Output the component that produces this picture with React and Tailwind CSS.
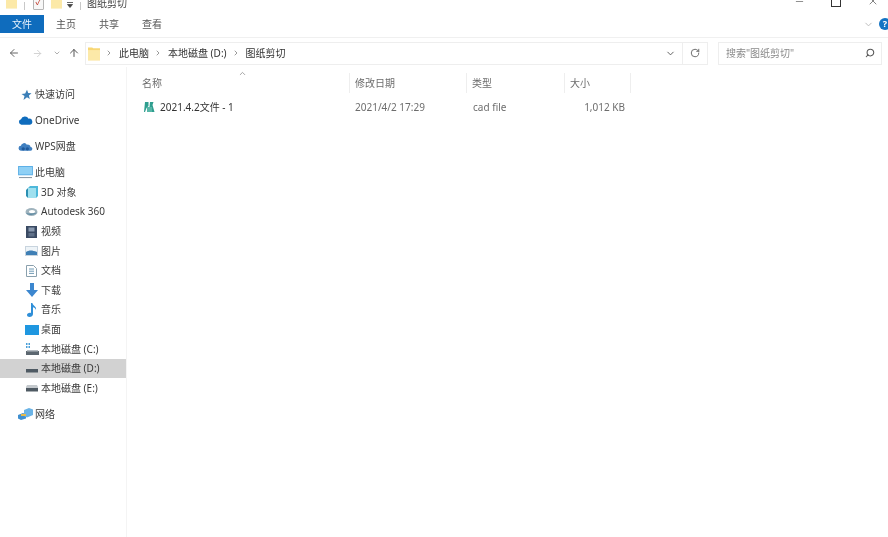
import { ArrowLeft, ArrowRight, ArrowUp, ChevronDown, ChevronRight, ChevronUp, RotateCw, Search, Minus, X } from "lucide-react";

const FONT = "font-['Noto_Sans','Noto_Sans_CJK_SC',sans-serif]";

function FolderIcon({ className }) {
  return (
    <svg className={className} viewBox="0 0 14 16">
      <path d="M0 1h5l1 1h8v14H0z" fill="#f8d775" />
      <path d="M0 4h14v12H0z" fill="#fce9a8" />
    </svg>
  );
}

const Star = () => (
  <svg className="h-3 w-3" viewBox="0 0 12 12">
    <path d="M7 .8l1.2 3.3 3.3.2-2.6 2.2.9 3.500L7 8.200 3.500 11l1-3.900L1.500 5l3.700-.6z" fill="#3b7fb8" />
  </svg>
);
const Cloud = () => (
  <svg className="h-[11px] w-[15px]" viewBox="0 0 16 12">
    <path d="M3.500 10.500a3 3 0 0 1-.4-5.900A4.500 4.500 0 0 1 11.400 4a3.300 3.300 0 0 1 1.400 6.500z" fill="#0f6cbd" />
  </svg>
);
const WpsCloud = () => (
  <svg className="h-[11px] w-[15px]" viewBox="0 0 16 12">
    <path d="M3 10.500A2.600 2.600 0 0 1 3 5.300 3.500 3.500 0 0 1 9.500 4 3 3 0 0 1 13.500 6.500a2 2 0 0 1 0 4z" fill="#3f7fc0" />
    <circle cx="5.500" cy="8.500" r="1.800" fill="#1f5a9c" />
    <circle cx="10" cy="8.500" r="1.800" fill="#1f5a9c" />
  </svg>
);
const Monitor = () => (
  <svg className="h-[13px] w-[15px]" viewBox="0 0 16 14">
    <path d="M0 0h16v10H0z" fill="#5aaee6" />
    <path d="M1 1h14v8H1z" fill="#8fd0f5" />
    <path d="M1 12h14v1H1z" fill="#7b8b99" />
  </svg>
);
const Cube = () => (
  <svg className="h-3 w-3" viewBox="0 0 12 12">
    <path d="M4 0h8v10l-2 2H2V2z" fill="#4db8da" />
    <path d="M2 2h8v10H2z" fill="#9fe0ef" />
    <path d="M0 4l2-2v10l-2-2z" fill="#2b8fb2" />
  </svg>
);
const Autodesk = () => (
  <svg className="h-3 w-[13px]" viewBox="0 0 13 12">
    <ellipse cx="6.500" cy="6" rx="6" ry="4" fill="#9fb3bd" />
    <ellipse cx="7" cy="5.500" rx="3" ry="1.600" fill="#fff" />
    <path d="M1 7c2 2.500 7 3 11-.5-3 1-7 1.500-11 .5z" fill="#5d8aa3" />
  </svg>
);
const Video = () => (
  <svg className="h-3 w-[11px]" viewBox="0 0 11 12">
    <path d="M0 0h11v12H0z" fill="#3a4a63" />
    <path d="M2.500 1.500h6v4h-6z" fill="#8a9ab0" />
    <path d="M2.500 7h6v3.500h-6z" fill="#5f7088" />
  </svg>
);
const Picture = () => (
  <svg className="h-2.5 w-[13px]" viewBox="0 0 13 10">
    <path d="M0 0h13v10H0z" fill="#c8d4de" />
    <path d="M1 1h11v8H1z" fill="#eef4f8" />
    <path d="M1 6c3-2 6-2 11 0v3H1z" fill="#3f7fb5" />
  </svg>
);
const Doc = () => (
  <svg className="h-3 w-[11px]" viewBox="0 0 11 12">
    <path d="M.5.5h7l3 3v8H.5z" fill="#fff" stroke="#8aa0ad" />
    <path d="M3 4h5M3 6.200h5M3 8.400h5" stroke="#6f9ab5" />
  </svg>
);
const Download = () => (
  <svg className="h-3.5 w-3" viewBox="0 0 12 14">
    <path d="M4 0h4v7h4l-6 7-6-7h4z" fill="#3c87cf" />
  </svg>
);
const Music = () => (
  <svg className="h-3.5 w-2.5" viewBox="0 0 10 14">
    <path d="M4 0h1.400c.4 2.600 4.600 3.600 3.600 7-.6-2-2-2.600-3-2.800V11c0 1.800-1.700 3-3.400 3C1 14 0 13.200 0 12c0-1.500 2-2.600 4-2z" fill="#2f8fd8" />
  </svg>
);
const Desktop = () => (
  <svg className="h-2.5 w-3.5" viewBox="0 0 14 10">
    <path d="M0 0h14v10H0z" fill="#1f97e0" />
  </svg>
);
const DriveC = () => (
  <svg className="h-3 w-3.5" viewBox="0 0 14 12">
    <path d="M1 0h1.500v2H1zM3.500 0H5v2H3.500zM1 3h1.500v2H1zM3.500 3H5v2H3.500z" fill="#4a9fd8" />
    <path d="M1 8h13v4H1z" fill="#5c6770" />
    <path d="M2 7h11v1.500H2z" fill="#b5bcc2" />
  </svg>
);
const Drive = () => (
  <svg className="h-2 w-3.5" viewBox="0 0 14 8">
    <path d="M2 1h10l1 2v4H1V3z" fill="#c4c9cd" />
    <path d="M1 4h12v3.500H1z" fill="#4f5a63" />
  </svg>
);
const DriveD = () => (
  <svg className="h-2 w-3.5" viewBox="0 0 14 8">
    <path d="M1 4h12v3.500H1z" fill="#4f5a63" />
  </svg>
);
const Network = () => (
  <svg className="h-3 w-4" viewBox="0 0 16 12">
    <path d="M0 7l5-2 3 1.500v4L3 12 0 10.500z" fill="#3f8fd0" />
    <path d="M6 2l5-2 4 1.500V7l-6 2.500L6 8z" fill="#6ab3e6" />
    <path d="M3 6h5v2H3z" fill="#e6b94a" />
  </svg>
);

function NavRow({ icon, label, indent, selected, className = "" }) {
  return (
    <div className={`flex h-[19.6px] items-center ${selected ? "bg-[#d2d2d2]" : ""} ${indent ? "pl-[22px]" : "pl-[16px]"} ${className}`}>
      <span className="flex w-[19px] shrink-0 items-center justify-center">{icon}</span>
      <span className="text-[10px] text-[#3a3a3a]">{label}</span>
    </div>
  );
}

function HeaderCell({ label, className }) {
  return (
    <div className={`flex h-full items-center border-r border-[#eeeeee] pl-[5px] text-[10px] text-[#6d6d6d] ${className}`}>
      {label}
    </div>
  );
}

export default function App() {
  return (
    <div className={`flex h-[537px] w-[888px] flex-col overflow-hidden bg-white blur-[0.3px] ${FONT}`}>
      {/* title bar, cut off at the top */}
      <div className="flex h-[10px] shrink-0 items-end justify-between overflow-hidden">
        <div className="flex items-end pl-[6px]">
          <FolderIcon className="h-[16px] w-[11px]" />
          <span className="ml-[7px] h-[8px] w-px bg-[#c8c8c8]" />
          <div className="ml-[8px] h-[14px] w-[11px] rounded-[1px] border border-[#b5b5b5] bg-[#f7f7f7] text-center text-[9px] leading-[10px] text-[#c0392b]">✓</div>
          <FolderIcon className="ml-[7px] h-[16px] w-[11px]" />
          <svg className="mb-[2px] ml-[5px] h-[6px] w-[6px]" viewBox="0 0 6 6">
            <path d="M0 .5h6M.5 2.500h5L3 5.500z" stroke="#444" strokeWidth="0.8" fill="#444" />
          </svg>
          <span className="ml-[7px] h-[8px] w-px bg-[#c8c8c8]" />
          <span className="ml-[6px] text-[10px] leading-[14px] text-[#444]">图纸剪切</span>
        </div>
        <div className="mb-[3px] flex items-end gap-[26px] pr-[9px]">
          <Minus className="h-[11px] w-[11px] text-[#333]" strokeWidth={1.2} />
          <div className="h-[11px] w-[10px] border border-[#333]" />
          <X className="h-[12px] w-[12px] text-[#333]" strokeWidth={1.2} />
        </div>
      </div>

      {/* ribbon tabs */}
      <div className="mt-[5px] flex h-[18px] shrink-0 items-center">
        <div className="flex h-[18px] w-[44px] items-center justify-center bg-[#0f6cbd] text-[10px] text-[#e8f2fb]">文件</div>
        <div className="ml-[12px] flex gap-[23px] text-[10px] text-[#555]">
          <span>主页</span>
          <span>共享</span>
          <span>查看</span>
        </div>
        <div className="ml-auto flex items-center pr-0">
          <ChevronDown className="h-[11px] w-[11px] text-[#b8b8b8]" />
          <div className="ml-[5px] mr-[-3px] flex h-[12px] w-[12px] items-center justify-center rounded-full bg-[#1273c4] text-[9px] font-bold text-white">?</div>
        </div>
      </div>

      {/* address bar */}
      <div className="mt-[4px] flex h-[30px] shrink-0 items-center border-t border-[#f0f0f0] pt-[1px]">
        <ArrowLeft className="ml-[8px] h-[12px] w-[12px] text-[#666]" />
        <ArrowRight className="ml-[12px] h-[11px] w-[11px] text-[#d0d0d0]" />
        <ChevronDown className="ml-[10px] h-[8px] w-[8px] text-[#888]" />
        <ArrowUp className="ml-[7px] h-[12px] w-[12px] text-[#555]" />
        <div className="ml-[5px] flex h-[23px] w-[623px] items-center border border-[#eeeeee]">
          <FolderIcon className="ml-[2px] h-[15px] w-[12px]" />
          <ChevronRight className="ml-[5px] h-[8px] w-[8px] text-[#666]" />
          <span className="ml-[6px] text-[10px] text-[#333]">此电脑</span>
          <ChevronRight className="ml-[5px] h-[8px] w-[8px] text-[#666]" />
          <span className="ml-[6px] text-[10px] text-[#333]">本地磁盘 (D:)</span>
          <ChevronRight className="ml-[5px] h-[8px] w-[8px] text-[#666]" />
          <span className="ml-[6px] text-[10px] text-[#333]">图纸剪切</span>
          <ChevronDown className="ml-auto mr-[6px] h-[11px] w-[11px] text-[#555]" />
          <div className="flex h-full w-[25px] items-center justify-center border-l border-[#eeeeee]">
            <RotateCw className="h-[10px] w-[10px] text-[#555]" />
          </div>
        </div>
        <div className="ml-[10px] flex h-[23px] w-[164px] items-center border border-[#eeeeee] pl-[7px] pr-[6px]">
          <span className="text-[10px] text-[#8a8a8a]">搜索"图纸剪切"</span>
          <Search className="ml-auto h-[10px] w-[10px] scale-x-[-1] text-[#555]" strokeWidth={2.5} />
        </div>
      </div>

      <div className="flex min-h-0 flex-1">
        {/* nav pane */}
        <div className="w-[127px] shrink-0 border-r border-[#f4f4f4] pt-[18px]">
          <NavRow icon={<Star />} label="快速访问" />
          <NavRow icon={<Cloud />} label="OneDrive" className="mt-[6.4px]" />
          <NavRow icon={<WpsCloud />} label="WPS网盘" className="mt-[6.4px]" />
          <NavRow icon={<Monitor />} label="此电脑" className="mt-[6.4px]" />
          <NavRow indent icon={<Cube />} label="3D 对象" />
          <NavRow indent icon={<Autodesk />} label="Autodesk 360" />
          <NavRow indent icon={<Video />} label="视频" />
          <NavRow indent icon={<Picture />} label="图片" />
          <NavRow indent icon={<Doc />} label="文档" />
          <NavRow indent icon={<Download />} label="下载" />
          <NavRow indent icon={<Music />} label="音乐" />
          <NavRow indent icon={<Desktop />} label="桌面" />
          <NavRow indent icon={<DriveC />} label="本地磁盘 (C:)" />
          <NavRow indent selected icon={<DriveD />} label="本地磁盘 (D:)" />
          <NavRow indent icon={<Drive />} label="本地磁盘 (E:)" />
          <NavRow icon={<Network />} label="网络" className="mt-[6.4px]" />
        </div>

        {/* file list */}
        <div className="min-w-0 flex-1 pl-[10px] pt-[6px]">
          <div className="relative flex h-[20px] items-center">
            <ChevronUp className="absolute left-[101px] top-[-4px] h-[9px] w-[9px] text-[#888]" />
            <HeaderCell label="名称" className="w-[213px]" />
            <HeaderCell label="修改日期" className="w-[117px]" />
            <HeaderCell label="类型" className="w-[98px]" />
            <HeaderCell label="大小" className="w-[66px]" />
          </div>
          <div className="mt-[4px] flex h-[20px] items-center text-[10px]">
            <div className="flex w-[213px] items-center pl-[7px] text-[#333]">
              <svg className="h-3 w-[11px]" viewBox="0 0 11 12">
                <path d="M1 1h3.500v4L2.500 7 1 11H0zM6 1h3.500L8.500 4l2 7H6.500L5.500 6z" fill="#2f9e8f" />
                <path d="M3 6h5v5H3z" fill="#57b7a8" />
              </svg>
              <span className="ml-[5px]">2021.4.2文件 - 1</span>
            </div>
            <div className="w-[117px] pl-[5px] text-[#6d6d6d]">2021/4/2 17:29</div>
            <div className="w-[98px] pl-[6px] text-[#6d6d6d]">cad file</div>
            <div className="w-[60px] text-right text-[#6d6d6d]">1,012 KB</div>
          </div>
        </div>
      </div>
    </div>
  );
}
